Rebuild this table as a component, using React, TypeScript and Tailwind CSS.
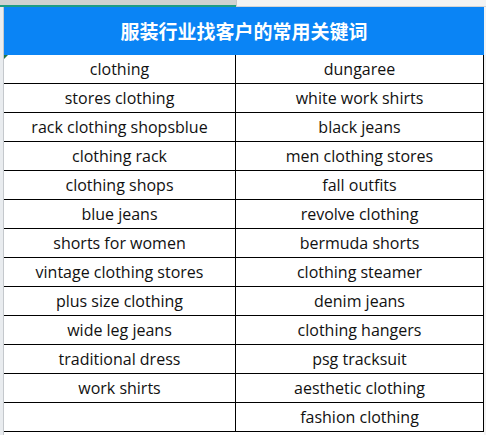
import React from "react"

const rows: [string, string][] = [
  ["clothing", "dungaree"],
  ["stores clothing", "white work shirts"],
  ["rack clothing shopsblue", "black jeans"],
  ["clothing rack", "men clothing stores"],
  ["clothing shops", "fall outfits"],
  ["blue jeans", "revolve clothing"],
  ["shorts for women", "bermuda shorts"],
  ["vintage clothing stores", "clothing steamer"],
  ["plus size clothing", "denim jeans"],
  ["wide leg jeans", "clothing hangers"],
  ["traditional dress", "psg tracksuit"],
  ["work shirts", "aesthetic clothing"],
  ["", "fashion clothing"],
]

export default function App() {
  return (
    <div className="w-[486px] h-[435px] overflow-hidden bg-white flex flex-col font-['Open_Sans','Noto_Sans',sans-serif]">
      {/* column header strip */}
      <div className="flex h-[7px] shrink-0">
        <div className="w-[236px] bg-[#cfd2d1] border-b-2 border-[#1e9c84]" />
        <div className="flex-1 bg-[#f3f3f3] border-b border-[#d4d4d4] border-l border-l-[#c8c8c8]" />
      </div>
      <div className="flex flex-1">
        {/* row gutter */}
        <div className="w-[4px] shrink-0 bg-[#e9ecef] border-r border-[#c4c8cc]" />
        <div className="w-[480px] shrink-0 flex flex-col">
          <div className="h-[48px] bg-[#0a84f5] flex items-center justify-center text-white font-bold text-[19px] font-['Noto_Sans_CJK_SC',sans-serif] relative">
            服装行业找客户的常用关键词
            <div className="absolute left-0 bottom-[-4px] w-0 h-0 border-t-[4px] border-t-[#217346] border-r-[4px] border-r-transparent" />
          </div>
          <div className="grid grid-cols-[232px_247px] border-r border-black">
            {rows.map(([a, b], i) => (
              <React.Fragment key={i}>
                <div className="h-[29px] border-b border-black border-r flex items-center justify-center text-[16px] text-[#111]">
                  {a}
                </div>
                <div className="h-[29px] border-b border-black flex items-center justify-center text-[16px] text-[#111]">
                  {b}
                </div>
              </React.Fragment>
            ))}
          </div>
        </div>
        <div className="flex-1 bg-[#f3f3f3]" />
      </div>
    </div>
  )
}
